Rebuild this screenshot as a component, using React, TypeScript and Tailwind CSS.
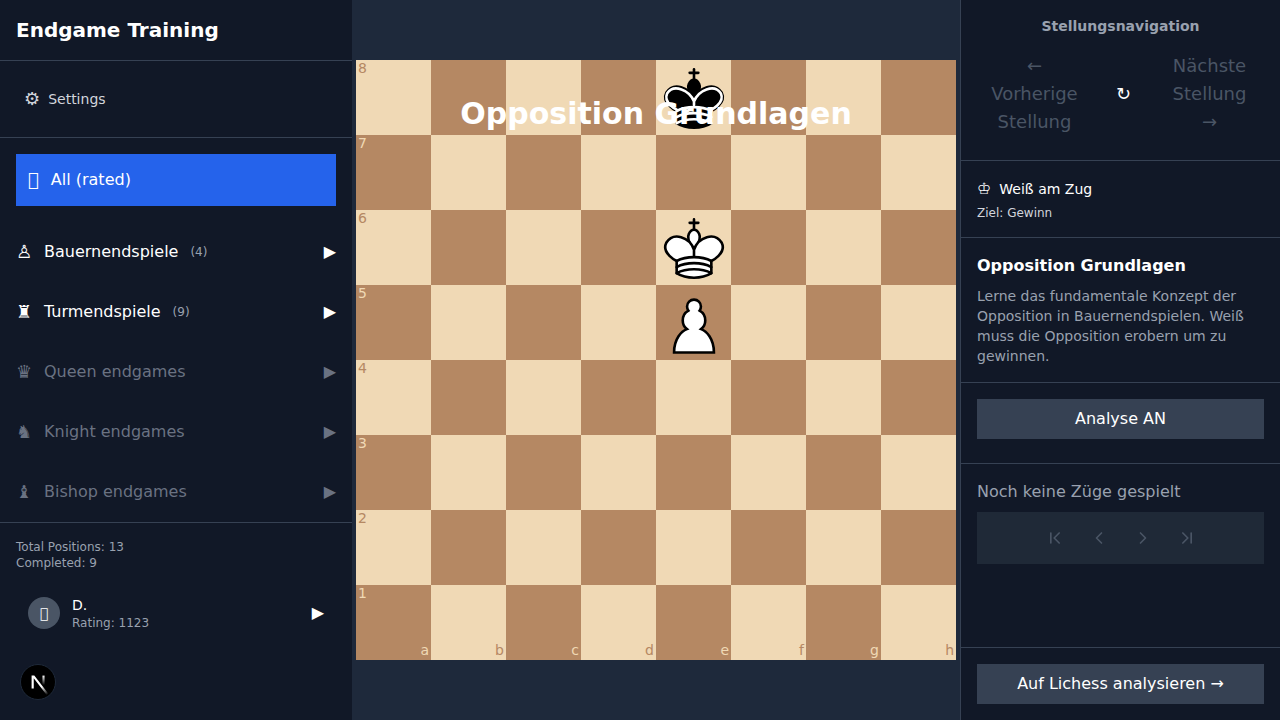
import { ChevronFirst, ChevronLast, ChevronLeft, ChevronRight } from "lucide-react";

const FILES = ["a", "b", "c", "d", "e", "f", "g", "h"];
const RANKS = [8, 7, 6, 5, 4, 3, 2, 1];

const CATEGORIES = [
  { icon: "♙", name: "Bauernendspiele", count: 4, active: true },
  { icon: "♜", name: "Turmendspiele", count: 9, active: true },
  { icon: "♛", name: "Queen endgames", active: false },
  { icon: "♞", name: "Knight endgames", active: false },
  { icon: "♝", name: "Bishop endgames", active: false },
];

const PIECE = "absolute -left-[1.5px] -top-[1.5px] h-[78px] w-[78px]";

function WhiteKing() {
  return (
    <svg viewBox="0 0 45 45" className={PIECE}>
      <g fill="none" fillRule="evenodd" stroke="#000" strokeLinecap="round" strokeLinejoin="round" strokeWidth="1.5">
        <path strokeLinejoin="miter" d="M22.5 11.63V6M20 8h5" />
        <path fill="#fff" strokeLinecap="butt" strokeLinejoin="miter" d="M22.5 25s4.5-7.5 3-10.5c0 0-1-2.5-3-2.5s-3 2.5-3 2.5c-1.5 3 3 10.5 3 10.5" />
        <path fill="#fff" d="M12.5 37c5.5 3.5 14.5 3.5 20 0v-7s9-4.5 6-10.5c-4-6.5-13.5-3.5-16 4V27v-3.5c-2.5-7.5-12-10.5-16-4-3 6 6 10.5 6 10.5v7" />
        <path d="M12.5 30c5.5-3 14.5-3 20 0M12.5 33.5c5.5-3 14.5-3 20 0M12.5 37c5.5-3 14.5-3 20 0" />
      </g>
    </svg>
  );
}

function BlackKing() {
  return (
    <svg viewBox="0 0 45 45" className={PIECE}>
      <g fill="none" fillRule="evenodd" stroke="#000" strokeLinecap="round" strokeLinejoin="round" strokeWidth="1.5">
        <path strokeLinejoin="miter" d="M22.5 11.63V6" />
        <path fill="#000" strokeLinecap="butt" strokeLinejoin="miter" d="M22.5 25s4.5-7.5 3-10.5c0 0-1-2.5-3-2.5s-3 2.5-3 2.5c-1.5 3 3 10.5 3 10.5" />
        <path fill="#000" d="M12.5 37c5.5 3.5 14.5 3.5 20 0v-7s9-4.5 6-10.5c-4-6.5-13.5-3.5-16 4V27v-3.5c-2.5-7.5-12-10.5-16-4-3 6 6 10.5 6 10.5v7" />
        <path strokeLinejoin="miter" d="M20 8h5" />
        <path stroke="#fff" d="M32 29.5s8.5-4 6.03-9.65C34.15 14 25 18 22.5 24.5v2.1-2.1C20 18 10.85 14 6.97 19.85 4.5 25.5 13 29.5 13 29.5" />
        <path stroke="#fff" d="M12.5 30c5.5-3 14.5-3 20 0m-20 3.5c5.5-3 14.5-3 20 0m-20 3.5c5.5-3 14.5-3 20 0" />
      </g>
    </svg>
  );
}

function WhitePawn() {
  return (
    <svg viewBox="0 0 45 45" className={PIECE}>
      <path fill="#fff" stroke="#000" strokeLinecap="round" strokeWidth="1.5" d="M22.5 9c-2.21 0-4 1.79-4 4 0 .89.29 1.71.78 2.38C17.33 16.5 16 18.59 16 21c0 2.03.94 3.84 2.41 5.03-3 1.06-7.41 5.55-7.41 13.47h23c0-7.92-4.41-12.41-7.41-13.47 1.47-1.19 2.41-3 2.41-5.03 0-2.41-1.33-4.5-3.28-5.62.49-.67.78-1.49.78-2.38 0-2.21-1.79-4-4-4z" />
    </svg>
  );
}

function NextMark() {
  return (
    <svg viewBox="0 0 180 180" className="h-8 w-8">
      <defs>
        <linearGradient id="nextDiag" gradientUnits="userSpaceOnUse" x1="109" y1="116.5" x2="144.5" y2="160.5">
          <stop stopColor="#fff" />
          <stop offset="1" stopColor="#fff" stopOpacity="0" />
        </linearGradient>
        <linearGradient id="nextStem" gradientUnits="userSpaceOnUse" x1="121" y1="54" x2="120.8" y2="106.9">
          <stop stopColor="#fff" />
          <stop offset="1" stopColor="#fff" stopOpacity="0" />
        </linearGradient>
      </defs>
      <path fill="url(#nextDiag)" d="M149.508 157.52L69.142 54H54V125.97H66.1136V69.3836L139.999 164.845C143.333 162.614 146.509 160.165 149.508 157.52Z" />
      <rect fill="url(#nextStem)" x="115" y="54" width="12" height="72" />
    </svg>
  );
}

function Sidebar() {
  return (
    <aside className="flex h-full w-[352px] shrink-0 flex-col bg-[#111827] text-white">
      <div className="border-b border-gray-700 p-4">
        <h1 className="text-xl font-bold">Endgame Training</h1>
      </div>

      <div className="border-b border-gray-700 px-6 py-[28px]">
        <button type="button" className="flex items-center gap-2 text-sm leading-5 text-gray-300">
          <span className="text-lg leading-5">⚙</span>
          Settings
        </button>
      </div>

      <nav className="flex-1 p-4 pb-0">
        <button type="button" className="flex h-[52px] w-full items-center gap-3 bg-[#2563eb] px-3 text-left">
          <span className="text-lg">{"\uE000"}</span>
          <span className="text-base">All (rated)</span>
        </button>

        <div className="mt-4">
          {CATEGORIES.map((c) => (
            <button
              key={c.name}
              type="button"
              className={[
                "flex h-[60px] w-full items-center text-left text-base",
                c.active ? "text-white" : "text-gray-500",
              ].join(" ")}
            >
              <span className="w-4 text-center text-lg">{c.icon}</span>
              <span className="ml-3">{c.name}</span>
              {c.count ? <span className="ml-3 text-xs text-gray-400">({c.count})</span> : null}
              <span className="ml-auto">▶</span>
            </button>
          ))}
        </div>
      </nav>

      <div className="border-t border-gray-700 p-4 pb-0">
        <div className="text-xs text-gray-400">Total Positions: 13</div>
        <div className="text-xs text-gray-400">Completed: 9</div>
        <div className="mt-2 flex items-center gap-3 px-3 py-4">
          <div className="flex h-8 w-8 items-center justify-center rounded-full bg-gray-600 text-sm">{"\uE000"}</div>
          <div className="flex-1">
            <div className="text-sm leading-5">D.</div>
            <div className="text-xs text-gray-400">Rating: 1123</div>
          </div>
          <span className="text-base">▶</span>
        </div>
        <div className="h-[88px]" />
      </div>
    </aside>
  );
}

function Board() {
  return (
    <main className="relative flex h-full flex-1 items-center justify-center bg-[#1e293b]">
      <div className="grid grid-cols-[repeat(8,75px)] grid-rows-[repeat(8,75px)]">
        {RANKS.map((rank, r) =>
          FILES.map((file, f) => {
            const light = (r + f) % 2 === 0;
            return (
              <div
                key={file + rank}
                className={["relative", light ? "bg-[#f0d9b5] text-[#b58863]" : "bg-[#b58863] text-[#f0d9b5]"].join(" ")}
              >
                {f === 0 ? <span className="absolute left-0.5 top-px text-sm leading-none">{rank}</span> : null}
                {r === 7 ? <span className="absolute bottom-[3px] right-0.5 text-sm leading-none">{file}</span> : null}
                {file === "e" && rank === 8 ? <BlackKing /> : null}
                {file === "e" && rank === 6 ? <WhiteKing /> : null}
                {file === "e" && rank === 5 ? <WhitePawn /> : null}
              </div>
            );
          }),
        )}
      </div>
      <h2 className="absolute left-0 right-0 top-[96px] text-center text-3xl font-bold text-white">
        Opposition Grundlagen
      </h2>
    </main>
  );
}

function RightPanel() {
  return (
    <aside className="flex h-full w-[320px] shrink-0 flex-col border-l border-gray-700 bg-[#111827] text-white">
      <div className="border-b border-gray-700 p-4">
        <h3 className="mb-2 text-center text-sm font-semibold text-gray-400">Stellungsnavigation</h3>
        <div className="flex items-center justify-between">
          <button type="button" disabled className="w-[115px] px-3 py-2 text-center text-lg text-gray-600">
            ← Vorherige Stellung
          </button>
          <button type="button" className="text-lg">↻</button>
          <button type="button" disabled className="w-[109px] px-3 py-2 text-center text-lg text-gray-600">
            Nächste Stellung →
          </button>
        </div>
      </div>

      <div className="border-b border-gray-700 p-4">
        <div className="mb-1 flex h-6 items-center gap-2 text-sm">
          <span className="text-base">♔</span>
          <span>Weiß am Zug</span>
        </div>
        <div className="text-xs text-gray-300">Ziel: Gewinn</div>
      </div>

      <div className="border-b border-gray-700 p-4">
        <h3 className="mb-2 text-base font-bold">Opposition Grundlagen</h3>
        <p className="text-sm text-gray-400">
          Lerne das fundamentale Konzept der Opposition in Bauernendspielen. Weiß muss die Opposition erobern um zu
          gewinnen.
        </p>
      </div>

      <div className="border-b border-gray-700 px-4 pb-6 pt-4">
        <button type="button" className="h-10 w-full bg-gray-700 text-base">Analyse AN</button>
      </div>

      <div className="flex-1 p-4">
        <div className="mb-2 text-base text-gray-400">Noch keine Züge gespielt</div>
        <div className="flex h-[52px] items-center justify-center gap-6 bg-[#1f2937] text-gray-600">
          <ChevronFirst size={20} />
          <ChevronLeft size={20} />
          <ChevronRight size={20} />
          <ChevronLast size={20} />
        </div>
      </div>

      <div className="border-t border-gray-700 p-4">
        <button type="button" className="h-10 w-full bg-gray-700 text-base">Auf Lichess analysieren →</button>
      </div>
    </aside>
  );
}

export default function App() {
  return (
    <div className="relative flex h-[720px] w-[1280px] overflow-hidden font-['DejaVu_Sans',sans-serif]">
      <Sidebar />
      <Board />
      <RightPanel />
      <div className="absolute left-5 top-[664px] flex h-9 w-9 items-center justify-center rounded-full border border-gray-800 bg-black">
        <NextMark />
      </div>
    </div>
  );
}
